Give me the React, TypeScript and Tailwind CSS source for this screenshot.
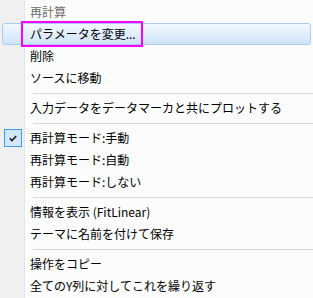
import React from 'react';

type Item =
  | { kind: 'header'; label: string }
  | { kind: 'item'; label: string; hover?: boolean; checked?: boolean }
  | { kind: 'sep' };

const ITEMS: Item[] = [
  { kind: 'header', label: '再計算' },
  { kind: 'item', label: 'パラメータを変更...', hover: true },
  { kind: 'item', label: '削除' },
  { kind: 'item', label: 'ソースに移動' },
  { kind: 'sep' },
  { kind: 'item', label: '入力データをデータマーカと共にプロットする' },
  { kind: 'sep' },
  { kind: 'item', label: '再計算モード:手動', checked: true },
  { kind: 'item', label: '再計算モード:自動' },
  { kind: 'item', label: '再計算モード:しない' },
  { kind: 'sep' },
  { kind: 'item', label: '情報を表示 (FitLinear)' },
  { kind: 'item', label: 'テーマに名前を付けて保存' },
  { kind: 'sep' },
  { kind: 'item', label: '操作をコピー' },
  { kind: 'item', label: '全てのY列に対してこれを繰り返す' },
];

function Check() {
  return (
    <div className="ml-[4px] w-[18px] h-[18px] border border-[#3d9bf2] bg-[#d3e7fb] flex items-center justify-center">
      <svg width="8" height="7" viewBox="0 0 8 7">
        <path d="M0.8 3.4 L3 5.6 L7.2 1" fill="none" stroke="#1a1a1a" strokeWidth="1.6" />
      </svg>
    </div>
  );
}

export default function App() {
  return (
    <div
      className="relative w-[313px] h-[298px] overflow-hidden pt-px text-[12px] leading-none text-black bg-[linear-gradient(to_right,#f0f0f0_0,#f0f0f0_24px,#e2e3e3_24px,#e2e3e3_25px,#ffffff_25px,#ffffff_26px,#fcfcfc_26px)]"
      style={{ fontFamily: '"Noto Sans CJK JP", "Noto Sans", sans-serif' }}
    >
      {ITEMS.map((it, i) => {
        if (it.kind === 'sep') {
          return (
            <div key={i} className="h-[8px] flex items-center pl-[33px]">
              <div className="h-px flex-1 bg-[#d7d7d7]" />
            </div>
          );
        }
        if (it.kind === 'header') {
          return (
            <div key={i} className="h-[22px] flex items-center pl-[30px] text-[#6d6d6d]">
              {it.label}
            </div>
          );
        }
        if (it.hover) {
          return (
            <div
              key={i}
              className="h-[22px] mx-[2px] flex items-center pl-[27px] rounded-[3px] border border-[#a9cbef] bg-[linear-gradient(to_bottom,#f3f8fe,#cfe4fb)]"
            >
              {it.label}
            </div>
          );
        }
        return (
          <div key={i} className="h-[22px] flex items-center">
            <div className="w-[30px] shrink-0 flex items-center">{it.checked && <Check />}</div>
            <span>{it.label}</span>
          </div>
        );
      })}

      {/* annotation box */}
      <div className="absolute left-[21px] top-[21px] w-[122px] h-[26px] border-2 border-[#ff00ff]" />
    </div>
  );
}
